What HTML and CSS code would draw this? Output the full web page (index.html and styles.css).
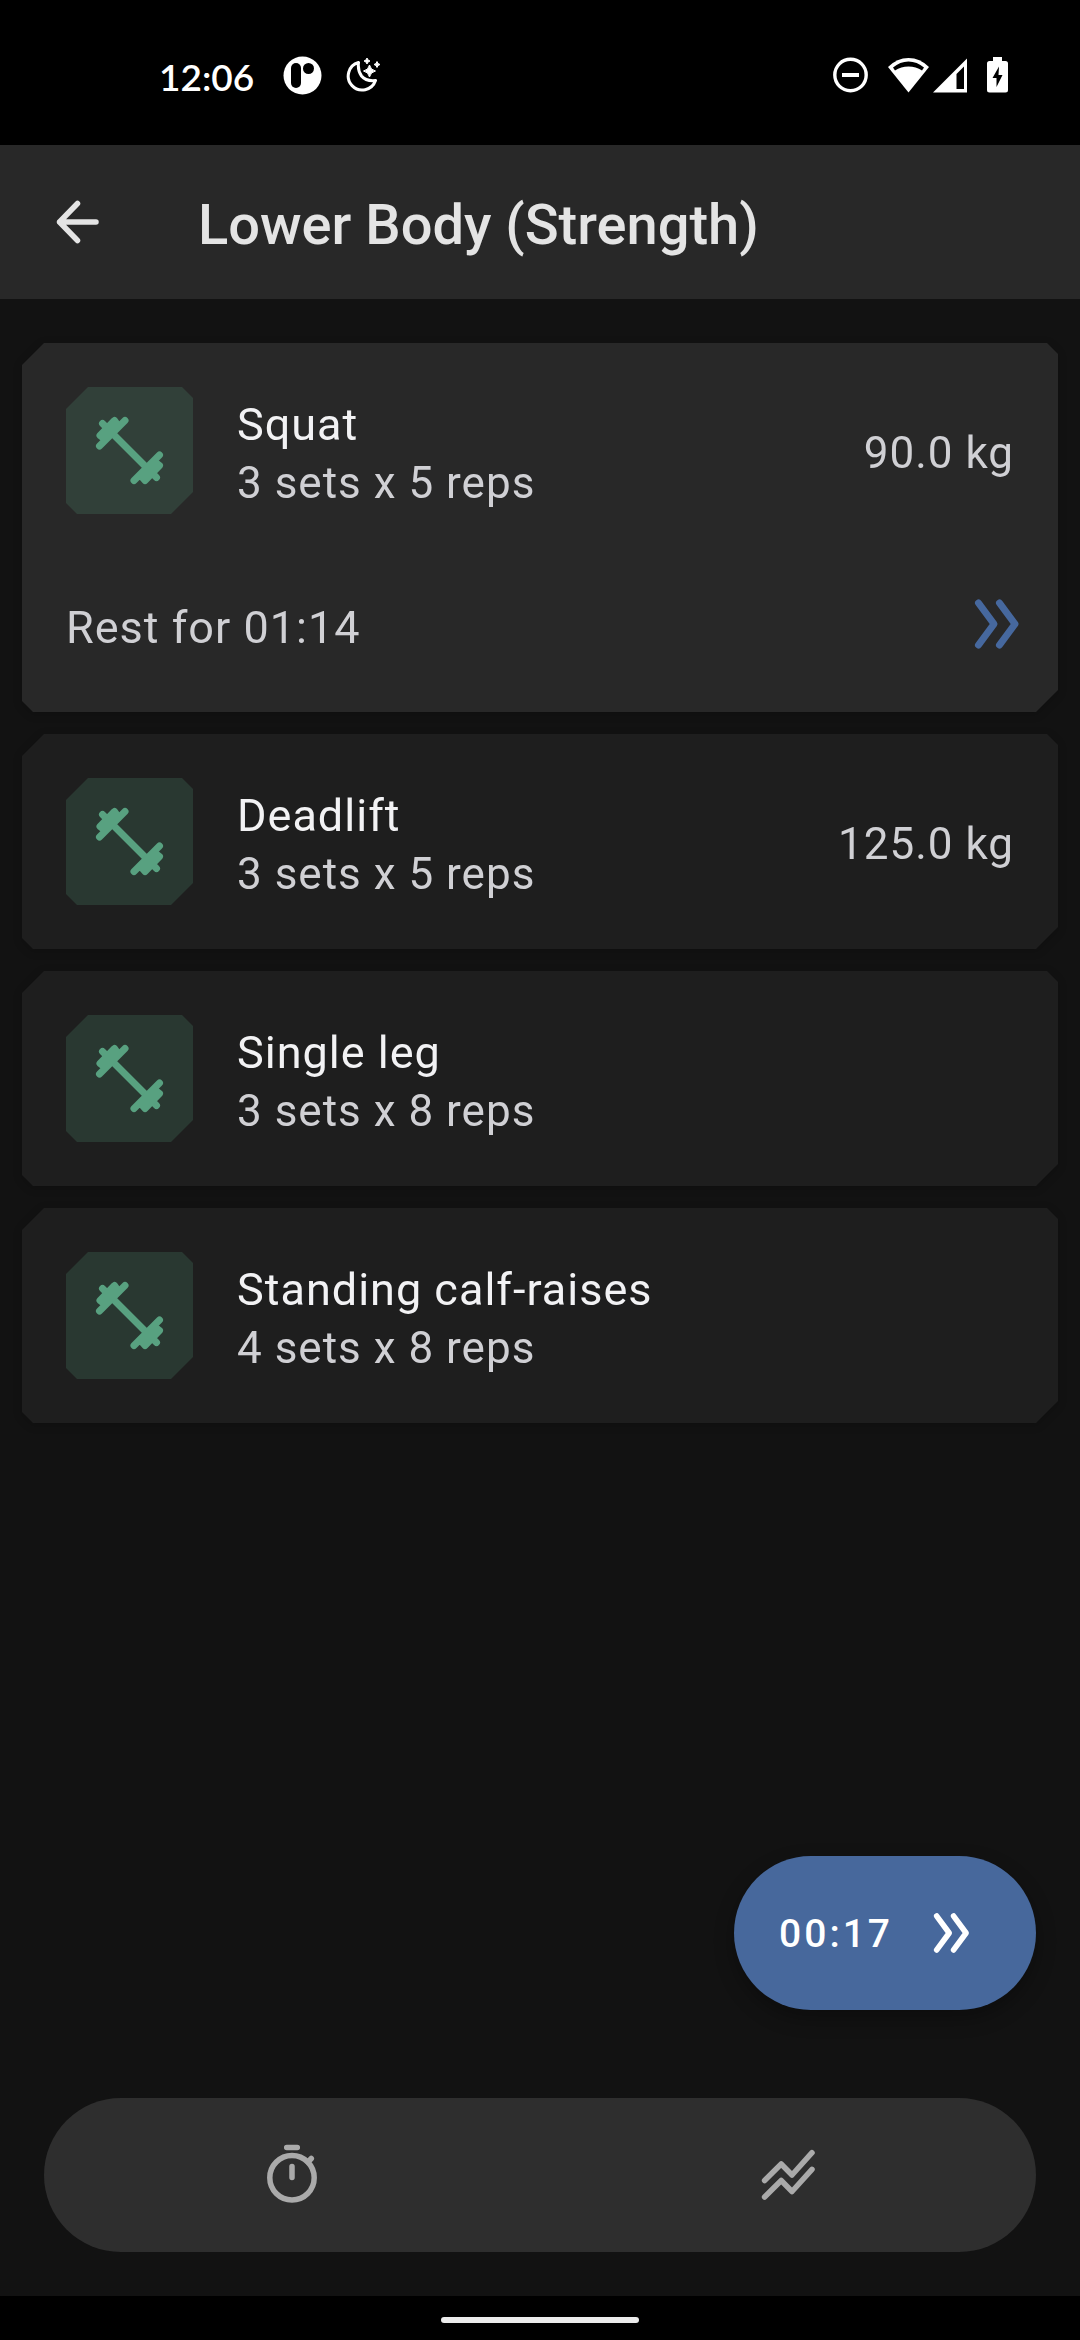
FILE: index.html
```html
<!DOCTYPE html>
<html lang="en">
<head>
<meta charset="utf-8">
<meta name="viewport" content="width=device-width, initial-scale=1">
<title>Lower Body (Strength)</title>
<link rel="stylesheet" href="styles.css">
</head>
<body>
<svg class="defs" aria-hidden="true">
  <symbol id="dumbbell" viewBox="0 0 127 127">
    <g stroke="currentColor" stroke-width="7" stroke-linecap="round" stroke-linejoin="round" fill="currentColor">
      <path d="M36.500 36.500L90.500 90.500"/>
      <path d="M59 33.500L33.500 59M48.500 33.500L34 48.500L38.500 52L52 38.500Z"/>
      <path d="M93.500 68L68 93.500M93.500 78.500L79 93.500L75 89L89 75Z"/>
    </g>
  </symbol>
  <symbol id="chevrons" viewBox="0 0 82 82">
    <path d="M24.500 20L40 41 24.500 62M45.500 20L61 41 45.500 62" fill="none" stroke="currentColor" stroke-width="7" stroke-linecap="round" stroke-linejoin="round"/>
  </symbol>
</svg>

<header class="status">
  <div class="status-group">
    <span class="clock">12:06</span>
    <svg class="app-logo" width="39" height="39" viewBox="0 0 39 39" aria-hidden="true">
      <circle cx="19.500" cy="19.500" r="19" fill="#fff"/>
      <rect x="8" y="7" width="10" height="25" rx="5"/>
      <circle cx="25.500" cy="12.500" r="5.500"/>
    </svg>
    <svg class="moon" width="36" height="36" viewBox="0 0 36 36" aria-hidden="true">
      <path d="M12.500 5.500A14 14 0 1 0 29.500 23.500Q20 24.500 15.500 19Q11.500 13.500 12.500 5.500Z" fill="none" stroke="#fff" stroke-width="3" stroke-linejoin="round"/>
      <path d="M23.500 8Q24.500 13 29.500 14Q24.500 15 23.500 20Q22.500 15 17.500 14Q22.500 13 23.500 8ZM21 1Q21.500 3.500 24 4Q21.500 4.500 21 7Q20.500 4.500 18 4Q20.500 3.500 21 1ZM31 4.500Q31.500 7 34 7.500Q31.500 8 31 10.500Q30.500 8 28 7.500Q30.500 7 31 4.500Z" fill="#fff" stroke="#fff"/>
    </svg>
  </div>
  <div class="status-group">
    <svg width="35" height="36" viewBox="0 0 35 36" aria-hidden="true">
      <circle cx="17.500" cy="18" r="15.700" fill="none" stroke="#fff" stroke-width="3.400"/>
      <path d="M9 18h17" stroke="#fff" stroke-width="4"/>
    </svg>
    <svg class="wifi" width="41" height="36" viewBox="0 0 41 36" aria-hidden="true">
      <path d="M20.500 35.500L0 10Q9 1 20.500 1T41 10Z" fill="#fff"/>
      <path d="M5 10.500Q12 4.500 20.500 4.500T36 10.500L34 13.500Q28 9.500 20.500 9.500T7 13.500Z" fill="#000"/>
    </svg>
    <svg class="signal" width="34" height="36" viewBox="0 0 34 36" aria-hidden="true">
      <path d="M0 35.500L34 1.500V35.500Z" fill="#fff"/>
      <path d="M23.500 17L31 9.500V32H23.500Z" fill="#000"/>
    </svg>
    <svg class="battery" width="21" height="36" viewBox="0 0 21 36" aria-hidden="true">
      <path d="M6 0H15V4H18.500Q21 4 21 6.500V33Q21 35.500 18.500 35.500H2.500Q0 35.500 0 33V6.500Q0 4 2.500 4H6Z" fill="#fff"/>
      <path d="M12 9.500L5.500 21H9.500V30L15.500 18H11.500Z"/>
    </svg>
  </div>
</header>

<div class="app-bar">
  <button class="back" type="button" aria-label="Back">
    <svg width="66" height="66" viewBox="0 0 66 66" aria-hidden="true">
      <path d="M52 33H15.500M33.500 14.500L15.500 33 33.500 51.500" fill="none" stroke="currentColor" stroke-width="5.500" stroke-linecap="round" stroke-linejoin="round"/>
    </svg>
  </button>
  <h1 class="title">Lower Body (Strength)</h1>
</div>

<main class="content">
  <ul class="exercises">
    <li class="exercise">
      <article class="card active">
        <div class="summary">
          <svg class="tile" aria-hidden="true"><use href="#dumbbell"/></svg>
          <div class="text">
            <h2 class="name">Squat</h2>
            <p class="detail">3 sets x 5 reps</p>
          </div>
          <p class="weight">90.0 kg</p>
        </div>
        <div class="rest">
          <p class="rest-label">Rest for 01:14</p>
          <button class="skip" type="button" aria-label="Skip rest"><svg width="82" height="82" aria-hidden="true"><use href="#chevrons"/></svg></button>
        </div>
      </article>
    </li>
    <li class="exercise">
      <article class="card">
        <div class="summary">
          <svg class="tile" aria-hidden="true"><use href="#dumbbell"/></svg>
          <div class="text">
            <h2 class="name">Deadlift</h2>
            <p class="detail">3 sets x 5 reps</p>
          </div>
          <p class="weight">125.0 kg</p>
        </div>
      </article>
    </li>
    <li class="exercise">
      <article class="card">
        <div class="summary">
          <svg class="tile" aria-hidden="true"><use href="#dumbbell"/></svg>
          <div class="text">
            <h2 class="name">Single leg</h2>
            <p class="detail">3 sets x 8 reps</p>
          </div>
        </div>
      </article>
    </li>
    <li class="exercise">
      <article class="card">
        <div class="summary">
          <svg class="tile" aria-hidden="true"><use href="#dumbbell"/></svg>
          <div class="text">
            <h2 class="name">Standing calf-raises</h2>
            <p class="detail">4 sets x 8 reps</p>
          </div>
        </div>
      </article>
    </li>
  </ul>
</main>

<footer class="dock">
  <button class="fab" type="button">
    <span class="fab-time">00:17</span>
    <svg width="66" height="66" aria-hidden="true"><use href="#chevrons"/></svg>
  </button>
  <nav class="tabs">
    <button class="tab" type="button" aria-label="Timer">
      <svg width="66" height="66" viewBox="0 0 66 66" fill="none" stroke="currentColor" stroke-width="5.500" stroke-linecap="round" aria-hidden="true">
        <circle cx="33" cy="35.750" r="22.200"/>
        <path d="M27.700 5.500H38.300M33 24.500V35.500M49 20L52.300 16.500"/>
      </svg>
    </button>
    <button class="tab" type="button" aria-label="Progress">
      <svg width="66" height="66" viewBox="0 0 66 66" fill="none" stroke="currentColor" stroke-width="5.500" stroke-linecap="round" stroke-linejoin="round" aria-hidden="true">
        <path d="M9.600 38.500L26.200 22 37 33 57 10.700M9.600 55L26.200 38.500 37 49.500 57 27.300"/>
      </svg>
    </button>
  </nav>
</footer>
<div class="gesture-bar"><span class="handle"></span></div>
</body>
</html>
```
FILE: styles.css
```css
* { box-sizing: border-box; }

body {
  margin: 0;
  min-height: 100vh;
  display: flex;
  flex-direction: column;
  background: #121212;
  color: #d0d0d4;
  font-family: Roboto, "Noto Sans", sans-serif;
  font-size: 44px;
  line-height: 59px;
}

h1, h2, p, ul { margin: 0; padding: 0; font-weight: 400; font-size: inherit; }
ul { list-style: none; }
svg { display: block; flex: none; }

button {
  border: 0;
  padding: 0;
  background: none;
  color: inherit;
  font: inherit;
  cursor: pointer;
}

.defs { position: absolute; width: 0; height: 0; }

/* System status bar */
.status {
  display: flex;
  justify-content: space-between;
  align-items: center;
  height: 145px;
  padding: 5px 72px 0 159px;
  background: #000;
}
.status-group { display: flex; align-items: center; }
.clock {
  padding-top: 4px;
  color: #fff;
  font-family: Lato, sans-serif;
  font-size: 37px;
  font-weight: 600;
  line-height: 48px;
}
.app-logo { margin-left: 29px; }
.moon { margin-left: 24px; }
.wifi { margin-left: 20px; }
.signal { margin-left: 4px; }
.battery { margin-left: 20px; }

/* App bar */
.app-bar {
  display: flex;
  align-items: center;
  gap: 88px;
  min-height: 154px;
  padding: 0 44px;
  background: #282828;
  color: #e4e4e4;
}
.title {
  padding-top: 6px;
  font-size: 56px;
  font-weight: 500;
  line-height: 66px;
}

/* Exercise list */
.content { flex: 1; padding: 44px 22px; }
.exercises { display: flex; flex-direction: column; gap: 22px; }
.exercise { filter: drop-shadow(0 2px 4px rgba(0, 0, 0, .2)); }

.card, .tile {
  clip-path: polygon(22px 0, calc(100% - 11px) 0, 100% 11px, 100% calc(100% - 22px), calc(100% - 22px) 100%, 11px 100%, 0 calc(100% - 11px), 0 22px);
}
.card { background: #1e1e1e; letter-spacing: 1px; }
.card.active { background: #282828; }

.summary {
  display: flex;
  align-items: center;
  gap: 44px;
  padding: 44px;
}
.tile {
  width: 127px;
  height: 127px;
  background: rgba(86, 160, 127, .2);
  color: #58a180;
}
.text { flex: 1; }
.text, .weight, .rest-label { padding-top: 6px; }
.name, .rest-label { font-size: 45px; }
.name { color: #f2f2f4; }

.rest {
  display: flex;
  align-items: center;
  justify-content: space-between;
  min-height: 154px;
  padding: 0 22px 22px 44px;
}
.skip { color: #46689e; }

/* Floating timer and bottom navigation */
.dock {
  display: flex;
  flex-direction: column;
  gap: 88px;
  padding: 0 44px 44px;
}
.fab {
  align-self: flex-end;
  display: flex;
  align-items: center;
  gap: 24px;
  height: 154px;
  padding: 0 53px 0 45px;
  border-radius: 77px;
  background: #47689c;
  box-shadow: 0 8px 20px rgba(0, 0, 0, .3);
  color: #fff;
  font-size: 39px;
  font-weight: 500;
  letter-spacing: 3px;
}
.fab-time { padding-top: 2px; }
.tabs {
  display: flex;
  height: 154px;
  border-radius: 77px;
  background: #2e2e2e;
  color: #aaa;
}
.tab { flex: 1; display: flex; align-items: center; justify-content: center; }

/* System gesture bar */
.gesture-bar {
  display: flex;
  align-items: center;
  justify-content: center;
  height: 44px;
  padding-top: 4px;
  background: #000;
}
.handle { width: 198px; height: 6px; border-radius: 3px; background: #ebebeb; }
```
